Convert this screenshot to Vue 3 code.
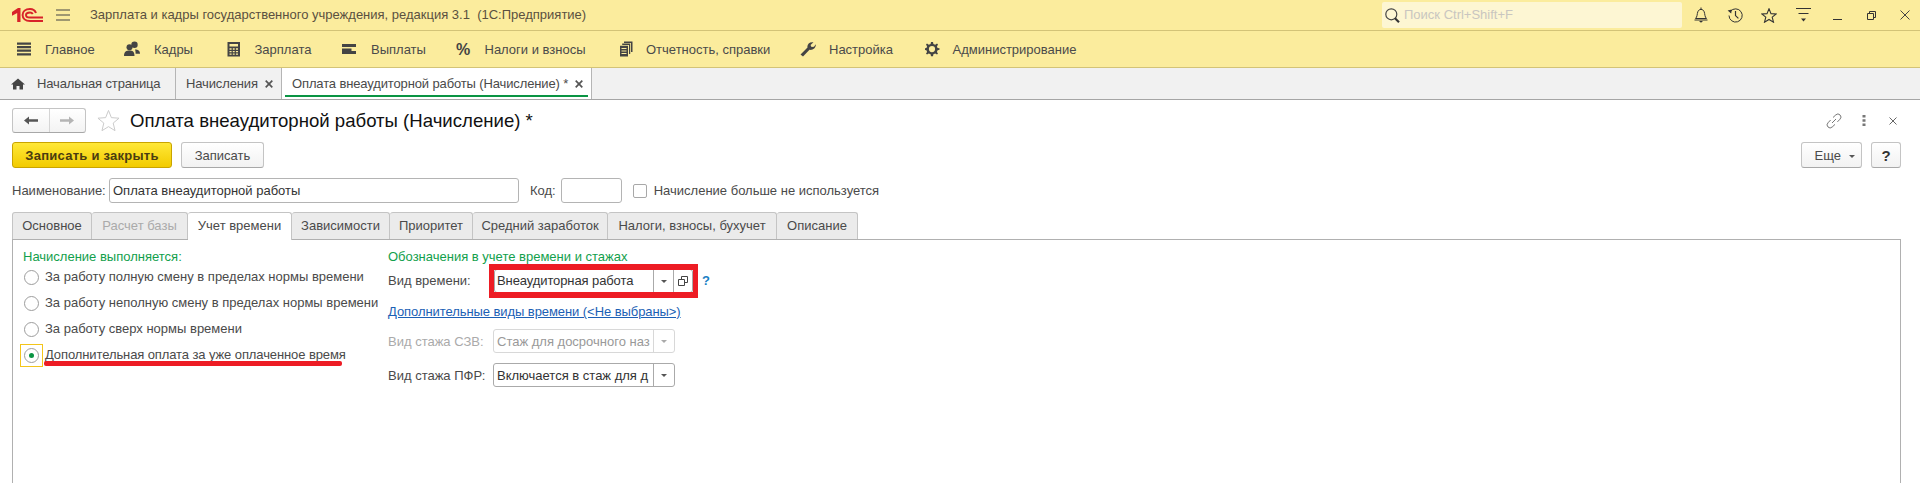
<template>
  <div class="page">
    <header class="titlebar">
      <svg class="logo" width="31" height="14" viewBox="0 0 31 14">
        <path d="M0 4 L6 0 H8.5 V14 H5.2 V5 L0 7.8 Z" fill="#d8232a" />
        <path d="M24 5 C23 2.4 21 1 18 1 C13.4 1 10.6 3.6 10.6 7 C10.6 10.4 13.4 13 18 13 H31 M20.8 6 C20.2 5 19.4 4.4 18 4.4 C15.6 4.4 14 5.4 14 7 C14 8.6 15.6 9.6 18 9.6 H31" stroke="#d8232a" stroke-width="2" fill="none" />
      </svg>
      <svg class="burger" width="14" height="12" viewBox="0 0 14 12">
        <path d="M0 1 H14 M0 6 H14 M0 11 H14" stroke="#444" fill="none" />
      </svg>
      <span class="app-title">Зарплата и кадры государственного учреждения, редакция 3.1&nbsp; (1С:Предприятие)</span>
      <div class="search">
        <svg width="15" height="15" viewBox="0 0 15 15">
          <circle cx="6.3" cy="6.3" r="5.5" stroke="#444" stroke-width="1.2" fill="none" />
          <path d="M10 10.2 L14 14.2" stroke="#333" stroke-width="2.2" />
        </svg>
        <span class="search-text">Поиск Ctrl+Shift+F</span>
      </div>
      <div class="sys-icons">
        <span class="sys-cell">
          <svg width="14" height="16" viewBox="0 0 14 16">
            <path d="M1.5 11.5 C3.4 9.8 3 7 3.8 4.8 C4.4 3.2 5.6 2.4 7 2.4 C8.4 2.4 9.6 3.2 10.2 4.8 C11 7 10.6 9.8 12.5 11.5 Z M0.5 13 H13.5" stroke="#333" fill="none" />
            <path d="M5 14 H9 L7 15.8 Z M6.5 0.5 H7.5 V2.4 H6.5 Z" fill="#333" />
          </svg>
        </span>
        <span class="sys-cell">
          <svg width="16" height="15" viewBox="0 0 16 15">
            <path d="M3.4 3.4 A6.6 6.6 0 1 1 2 7.5" stroke="#333" fill="none" />
            <path d="M0.6 2.6 L4.8 1.6 L4.2 5.6 Z" fill="#333" />
            <path d="M8.5 3 V7.6 L11.4 10.4" stroke="#333" stroke-width="1.2" fill="none" />
          </svg>
        </span>
        <span class="sys-cell">
          <svg width="16" height="15" viewBox="0 0 16 15">
            <path d="M8 0.8 L10 5.6 L15.2 5.9 L11.2 9.2 L12.5 14.2 L8 11.5 L3.5 14.2 L4.8 9.2 L0.8 5.9 L6 5.6 Z" stroke="#333" stroke-width="1.1" fill="none" />
          </svg>
        </span>
        <span class="sys-cell">
          <svg width="15" height="14" viewBox="0 0 15 14">
            <path d="M0 0.5 H15 M2.5 5.5 H12.5" stroke="#333" fill="none" />
            <path d="M5 10.5 H10 L7.5 13.5 Z" fill="#333" />
          </svg>
        </span>
        <span class="sys-cell">
          <svg width="9" height="10" viewBox="0 0 9 10"><path d="M0 9.5 H9" stroke="#333" /></svg>
        </span>
        <span class="sys-cell">
          <svg width="9" height="9" viewBox="0 0 9 9">
            <path d="M0.5 2.5 H6.5 V8.5 H0.5 Z M2.5 2.5 V0.5 H8.5 V6.5 H6.5" stroke="#333" fill="none" />
          </svg>
        </span>
        <span class="sys-cell">
          <svg width="10" height="10" viewBox="0 0 10 10">
            <path d="M0.5 0.5 L9.5 9.5 M9.5 0.5 L0.5 9.5" stroke="#444" fill="none" />
          </svg>
        </span>
      </div>
    </header>

    <nav class="sections">
      <a
        v-for="s in sections"
        :key="s.name"
        class="section"
        :style="{ width: s.width + 'px', gap: s.gap + 'px' }"
      >
        <svg width="16" height="16" viewBox="0 0 16 16" v-html="s.icon"></svg>
        <span>{{ s.name }}</span>
      </a>
    </nav>

    <div class="open-tabs">
      <div class="open-tab home">
        <svg width="14" height="12" viewBox="0 0 14 12">
          <path d="M7 0.5 L14 6.5 H12 V11.5 H8.5 V8 H5.5 V11.5 H2 V6.5 H0 Z" fill="#444" />
        </svg>
        <span>Начальная страница</span>
      </div>
      <div class="open-tab list">
        <span>Начисления</span>
        <svg class="close" width="8" height="8" viewBox="0 0 8 8"><path d="M0.7 0.7 L7.3 7.3 M7.3 0.7 L0.7 7.3" stroke="#555" stroke-width="1.7" /></svg>
      </div>
      <div class="open-tab current">
        <span>Оплата внеаудиторной работы (Начисление) *</span>
        <svg class="close" width="8" height="8" viewBox="0 0 8 8"><path d="M0.7 0.7 L7.3 7.3 M7.3 0.7 L0.7 7.3" stroke="#555" stroke-width="1.7" /></svg>
      </div>
    </div>

    <main class="form">
      <div class="form-head">
        <div class="nav-btns">
          <button>
            <svg width="14" height="9" viewBox="0 0 14 9"><path d="M0 4.5 L5 0.5 V3.3 H14 V5.7 H5 V8.5 Z" fill="#555" /></svg>
          </button>
          <button>
            <svg width="14" height="9" viewBox="0 0 14 9"><path d="M14 4.5 L9 0.5 V3.3 H0 V5.7 H9 V8.5 Z" fill="#b4b4b4" /></svg>
          </button>
        </div>
        <svg class="fav" width="23" height="23" viewBox="0 0 24 24">
          <path d="M12 1.5 L15 9 L23 9.6 L16.9 14.7 L18.8 22.6 L12 18.4 L5.2 22.6 L7.1 14.7 L1 9.6 L9 9 Z" stroke="#c9c9c9" fill="none" />
        </svg>
        <h1>Оплата внеаудиторной работы (Начисление) *</h1>
        <div class="head-tools">
          <svg width="16" height="16" viewBox="0 0 16 16">
            <path d="M6 10 L10 6 M7 4.5 L9.8 1.9 A2.6 2.6 0 0 1 14 6.2 L11.4 8.9 M9 11.4 L6.2 14 A2.6 2.6 0 0 1 2 9.8 L4.6 7" stroke="#777" fill="none" />
          </svg>
          <svg class="dots" width="4" height="11" viewBox="0 0 4 11">
            <path d="M0.5 0 H3.5 V2.5 H0.5 Z M0.5 4.2 H3.5 V6.7 H0.5 Z M0.5 8.5 H3.5 V11 H0.5 Z" fill="#777" />
          </svg>
          <svg width="8" height="8" viewBox="0 0 8 8">
            <path d="M0.5 0.5 L7.5 7.5 M7.5 0.5 L0.5 7.5" stroke="#666" fill="none" />
          </svg>
        </div>
      </div>

      <div class="commands">
        <button class="btn primary">Записать и закрыть</button>
        <button class="btn">Записать</button>
        <div class="commands-right">
          <button class="btn more">Еще <i class="caret"></i></button>
          <button class="btn help">?</button>
        </div>
      </div>

      <div class="name-row">
        <label class="name-label">Наименование:</label>
        <div class="input name">Оплата внеаудиторной работы</div>
        <label class="code-label">Код:</label>
        <div class="input code"></div>
        <span class="checkbox"></span>
        <label>Начисление больше не используется</label>
      </div>

      <div class="tabs">
        <div
          v-for="t in tabs"
          :key="t.name"
          class="tab"
          :class="{ active: t.active, disabled: t.disabled }"
          :style="{ width: t.width + 'px' }"
        >{{ t.name }}</div>
      </div>

      <div class="panel">
        <section class="col-left">
          <div class="group-title">Начисление выполняется:</div>
          <div v-for="r in radios" :key="r.text" class="radio-row" :class="{ checked: r.checked }">
            <span class="radio-box"><span class="radio"></span></span>
            <span class="radio-text">{{ r.text }}</span>
            <i v-if="r.checked" class="red-line"></i>
          </div>
        </section>

        <section class="col-right">
          <div class="group-title">Обозначения в учете времени и стажах</div>
          <div class="field-row first">
            <label>Вид времени:</label>
            <div class="combo wide">
              <span class="combo-text">Внеаудиторная работа</span>
              <span class="combo-btn"><i class="caret"></i></span>
              <span class="combo-btn">
                <svg width="10" height="10" viewBox="0 0 10 10">
                  <path d="M0.5 3.5 H6.5 V9.5 H0.5 Z M3.5 3.5 V0.5 H9.5 V6.5 H6.5" stroke="#444" fill="none" />
                </svg>
              </span>
              <i class="red-box"></i>
            </div>
            <a class="hint">?</a>
          </div>
          <a class="extra-link">Дополнительные виды времени (&lt;Не выбраны&gt;)</a>
          <div class="field-row muted">
            <label>Вид стажа СЗВ:</label>
            <div class="combo">
              <span class="combo-text">Стаж для досрочного наз</span>
              <span class="combo-btn"><i class="caret"></i></span>
            </div>
          </div>
          <div class="field-row">
            <label>Вид стажа ПФР:</label>
            <div class="combo">
              <span class="combo-text">Включается в стаж для д</span>
              <span class="combo-btn"><i class="caret"></i></span>
            </div>
          </div>
        </section>
      </div>
    </main>
  </div>
</template>

<script setup>
const sections = [
  {
    name: "Главное",
    width: 107,
    gap: 12,
    icon: '<path d="M0 1.5 H14 V3.7 H0 Z M0 5 H14 V7.2 H0 Z M0 8.6 H14 V10.8 H0 Z M0 12.2 H14 V14.4 H0 Z" fill="#444"/>',
  },
  {
    name: "Кадры",
    width: 102.5,
    gap: 14,
    icon: '<circle cx="10.5" cy="3.8" r="3.2" fill="#444"/><circle cx="5.5" cy="6.2" r="3" fill="#444"/><path d="M0 15 C0 10.5 2.5 9.4 5.5 9.4 C8.5 9.4 10.5 10.5 10.5 15 Z M11 8.4 C14 8.4 16 9.5 16 12.8 H11.6 C11.6 11 11.5 9.8 11 8.4 Z" fill="#444"/>',
  },
  {
    name: "Зарплата",
    width: 115.5,
    gap: 12,
    icon: '<path fill-rule="evenodd" d="M0.5 1 H13 V15.5 H0.5 Z M2.5 3 V5.5 H11 V3 Z M2.5 7.2 V8.7 H4.6 V7.2 Z M5.8 7.2 V8.7 H7.7 V7.2 Z M8.9 7.2 V8.7 H11 V7.2 Z M2.5 9.9 V11.2 H4.6 V9.9 Z M5.8 9.9 V11.2 H7.7 V9.9 Z M8.9 9.9 V11.2 H11 V9.9 Z M2.5 12.4 V13.8 H4.6 V12.4 Z M5.8 12.4 V13.8 H7.7 V12.4 Z M8.9 12.4 V13.8 H11 V12.4 Z" fill="#444"/>',
  },
  {
    name: "Выплаты",
    width: 113.5,
    gap: 13,
    icon: '<path d="M0 3 H14 V6 H0 Z M0 7.5 H9.5 V10 H14 V13 H0 Z" fill="#444"/>',
  },
  {
    name: "Налоги и взносы",
    width: 163.5,
    gap: 13,
    icon: '<text x="0" y="14" font-family="Liberation Sans" font-weight="700" font-size="16" fill="#444">%</text>',
  },
  {
    name: "Отчетность, справки",
    width: 181,
    gap: 11,
    icon: '<path fill-rule="evenodd" d="M5 0.5 H13.5 V11 H12 V2 H5 Z M3.2 2.5 H11.2 V13 H10 V4 H3.2 Z M1 4.8 H9 V15.5 H1 Z M2.5 7 V8 H7.5 V7 Z M2.5 9.5 V10.5 H7.5 V9.5 Z M2.5 12 V13 H7.5 V12 Z" fill="#444"/>',
  },
  {
    name: "Настройка",
    width: 124.5,
    gap: 13,
    icon: '<path d="M0.5 13.5 L7.5 6.5 C6.8 3.5 9.5 0.5 13.5 1.3 L10.5 4 L11.5 6 L14 5.8 L15.8 3.2 C16.2 7 12.5 9.6 9.5 8.8 L3 15.5 Z" fill="#444"/>',
  },
  {
    name: "Администрирование",
    width: 200,
    gap: 12,
    icon: '<path fill-rule="evenodd" d="M6 1 H8 L8.4 3 L10.2 3.7 L12 2.6 L13 3.6 L11.9 5.4 L12.6 7 L14.5 7.2 V8.8 L12.6 9.3 L11.9 11 L13 12.6 L12 13.6 L10.2 12.6 L8.4 13.3 L8 15.2 H6 L5.6 13.3 L3.8 12.6 L2 13.6 L1 12.6 L2.1 11 L1.4 9.3 L-0.5 8.8 V7.2 L1.4 7 L2.1 5.4 L1 3.6 L2 2.6 L3.8 3.7 L5.6 3 Z M7 5 A3.1 3.1 0 1 0 7 11.2 A3.1 3.1 0 1 0 7 5 Z" fill="#444"/>',
  },
];

const tabs = [
  { name: "Основное", width: 80 },
  { name: "Расчет базы", width: 96, disabled: true },
  { name: "Учет времени", width: 104, active: true },
  { name: "Зависимости", width: 98 },
  { name: "Приоритет", width: 83 },
  { name: "Средний заработок", width: 135 },
  { name: "Налоги, взносы, бухучет", width: 169 },
  { name: "Описание", width: 81 },
];

const radios = [
  { text: "За работу полную смену в пределах нормы времени" },
  { text: "За работу неполную смену в пределах нормы времени" },
  { text: "За работу сверх нормы времени" },
  { text: "Дополнительная оплата за уже оплаченное время", checked: true },
];
</script>

<style>
html,
body {
  margin: 0;
  background: #fff;
  overflow: hidden;
}
</style>

<style scoped>
.page {
  width: 1920px;
  height: 483px;
  overflow: hidden;
  font-family: "Liberation Sans", Arial, sans-serif;
  font-size: 13px;
  color: #4a4a4a;
  background: #fff;
}

.titlebar {
  height: 31px;
  box-sizing: border-box;
  background: #fbec9d;
  border-bottom: 1px solid #d3c377;
  display: flex;
  align-items: center;
  padding-left: 12px;
}

.logo {
  flex: none;
}

.burger {
  flex: none;
  margin-left: 13px;
}

.app-title {
  flex: 1;
  margin: -1px 0 0 20px;
  color: #5a5040;
  white-space: nowrap;
}

.search {
  flex: none;
  width: 300px;
  height: 26px;
  margin-right: 2px;
  box-sizing: border-box;
  background: #fdf6d3;
  border-radius: 2px;
  display: flex;
  align-items: center;
  gap: 4px;
  padding-left: 3px;
  color: #c9c6c0;
}

.search-text {
  margin-top: -1px;
}

.sys-icons {
  flex: none;
  width: 236px;
  height: 30px;
  display: flex;
}

.sys-cell {
  flex: none;
  width: 34px;
  height: 30px;
  display: flex;
  align-items: center;
  justify-content: center;
}

.sections {
  height: 37px;
  box-sizing: border-box;
  background: #fbec9d;
  border-bottom: 1px solid #d3c377;
  display: flex;
  align-items: center;
  padding-left: 17px;
}

.section {
  display: flex;
  align-items: center;
  flex: none;
  color: #4a4a4a;
  white-space: nowrap;
}

.section svg {
  flex: none;
}

.open-tabs {
  height: 32px;
  box-sizing: border-box;
  background: #f1f1f1;
  border-bottom: 1px solid #a5a5a5;
  display: flex;
}

.open-tab {
  display: flex;
  align-items: center;
  box-sizing: border-box;
  border-right: 1px solid #b5b5b5;
  position: relative;
  white-space: nowrap;
  letter-spacing: -0.13px;
}

.open-tab.home {
  width: 176px;
  padding-left: 11px;
  gap: 12px;
}

.open-tab.list {
  width: 106px;
  padding-left: 10px;
}

.open-tab.current {
  width: 310px;
  padding-left: 10px;
  background: #fff;
}

.open-tab.current::after {
  content: "";
  position: absolute;
  left: 3px;
  right: 3px;
  bottom: 2px;
  height: 2px;
  background: #0a9443;
}

.close {
  margin-left: 7px;
  flex: none;
}

.form {
  padding: 8px 19px 0 12px;
}

.form-head {
  height: 25px;
  display: flex;
  align-items: center;
}

.nav-btns {
  display: flex;
  height: 25px;
  box-sizing: border-box;
  width: 74px;
  border: 1px solid #c4c4c4;
  border-bottom-color: #a8a8a8;
  border-radius: 3px;
  background: linear-gradient(#fff, #f3f3f3);
}

.nav-btns button {
  flex: 1;
  padding: 0;
  border: 0;
  background: none;
  display: flex;
  align-items: center;
  justify-content: center;
}

.nav-btns button + button {
  border-left: 1px solid #d5d5d5;
}

.fav {
  margin-left: 11px;
  flex: none;
}

h1 {
  margin: 0 0 0 10px;
  font-size: 18.6px;
  font-weight: 400;
  color: #111;
  white-space: nowrap;
}

.head-tools {
  margin-left: auto;
  padding-right: 4px;
  display: flex;
  align-items: center;
}

.dots {
  margin: 0 23px 0 20px;
}

.commands {
  margin-top: 9px;
  height: 26px;
  display: flex;
  gap: 9px;
}

.btn {
  height: 26px;
  box-sizing: border-box;
  padding: 0;
  border: 1px solid #c4c4c4;
  border-bottom-color: #a8a8a8;
  border-radius: 3px;
  background: linear-gradient(#fff, #f2f2f2);
  font-family: inherit;
  font-size: 13px;
  color: #4a4a4a;
  width: 83px;
}

.btn.primary {
  width: 160px;
  font-weight: 700;
  background: linear-gradient(#ffe838, #f2cb00);
  border-color: #c9a400;
  color: #4a3c10;
  letter-spacing: 0.25px;
}

.commands-right {
  margin-left: auto;
  display: flex;
  gap: 9px;
}

.btn.more {
  width: 61px;
  padding-left: 6px;
  text-align: center;
}

.btn.more .caret {
  margin-left: 4px;
}

.btn.help {
  width: 30px;
  font-size: 15px;
  font-weight: 700;
  color: #333;
}

.caret {
  display: inline-block;
  width: 0;
  height: 0;
  border-left: 3px solid transparent;
  border-right: 3px solid transparent;
  border-top: 3px solid #555;
  vertical-align: middle;
}

.name-row {
  margin-top: 10px;
  height: 25px;
  display: flex;
  align-items: center;
}

.name-label {
  width: 97px;
  flex: none;
}

.input {
  height: 25px;
  box-sizing: border-box;
  border: 1px solid #b4b4b4;
  border-radius: 3px;
  line-height: 23px;
  padding-left: 3px;
  color: #333;
}

.input.name {
  width: 410px;
}

.code-label {
  margin-left: 11px;
}

.input.code {
  width: 61px;
  margin-left: 5px;
}

.checkbox {
  width: 14px;
  height: 14px;
  box-sizing: border-box;
  border: 1px solid #a8a8a8;
  border-radius: 2px;
  margin: 0 7px 0 11px;
}

.tabs {
  margin-top: 9px;
  height: 27px;
  display: flex;
  position: relative;
  z-index: 1;
}

.tab {
  height: 27px;
  box-sizing: border-box;
  flex: none;
  text-align: center;
  line-height: 25px;
  background: #ebebeb;
  border: 1px solid #c4c4c4;
  border-bottom: 0;
  border-left-width: 0;
  border-radius: 3px 3px 0 0;
}

.tab:first-child {
  border-left-width: 1px;
}

.tab.disabled {
  color: #aaa;
}

.tab.active {
  height: 28px;
  background: #fff;
}

.panel {
  height: 244px;
  box-sizing: border-box;
  border: 1px solid #b0b0b0;
  border-bottom: 0;
  padding: 10px 0 0 10px;
  display: flex;
}

.group-title {
  color: #12a04c;
  height: 14px;
  line-height: 14px;
}

.col-left {
  width: 365px;
  flex: none;
}

.radio-row {
  height: 26px;
  display: flex;
  align-items: center;
  position: relative;
}

.radio-box {
  width: 23px;
  height: 23px;
  box-sizing: border-box;
  display: flex;
  align-items: center;
  justify-content: center;
  flex: none;
  margin-left: -3px;
  border: 1px solid transparent;
}

.radio {
  width: 15px;
  height: 15px;
  box-sizing: border-box;
  border: 1px solid #9d9d9d;
  border-radius: 50%;
  display: block;
  position: relative;
}

.radio-text {
  margin: -2px 0 0 2px;
  white-space: nowrap;
}

.checked .radio-box {
  border-color: #f3c51b;
}

.checked .radio-text {
  letter-spacing: -0.1px;
}

.checked .radio::after {
  content: "";
  position: absolute;
  left: 4px;
  top: 4px;
  width: 5px;
  height: 5px;
  border-radius: 50%;
  background: #0a9443;
}

.red-line {
  position: absolute;
  left: 21px;
  top: 19px;
  width: 298px;
  height: 5px;
  border-radius: 2px;
  background: #ed1c24;
}

.col-right {
  flex: 1;
}

.field-row {
  display: flex;
  align-items: center;
  height: 24px;
  margin-top: 10px;
}

.field-row label {
  width: 105px;
  flex: none;
  white-space: nowrap;
}

.field-row.first {
  margin-top: 5px;
}

.field-row.first label {
  width: 106px;
  margin-top: -2px;
}

.combo {
  width: 182px;
  height: 24px;
  box-sizing: border-box;
  border: 1px solid #aaa;
  border-radius: 3px;
  display: flex;
  align-items: center;
  position: relative;
  color: #333;
}

.combo-text {
  flex: 1;
  min-width: 0;
  overflow: hidden;
  white-space: nowrap;
  padding-left: 3px;
}

.combo-btn {
  width: 21px;
  height: 100%;
  box-sizing: border-box;
  border-left: 1px solid #aaa;
  display: flex;
  align-items: center;
  justify-content: center;
  flex: none;
}

.combo.wide {
  width: 199px;
}

.wide .combo-text {
  padding-left: 2px;
  margin-top: -2px;
  letter-spacing: -0.1px;
}

.wide .combo-btn {
  width: 20px;
}

.wide .combo-btn:last-of-type {
  width: 19px;
}

.red-box {
  position: absolute;
  left: -6px;
  top: -6px;
  right: -6px;
  bottom: -6px;
  border-style: solid;
  border-color: #ed1c24;
  border-width: 6px 5px;
}

.hint {
  margin: -1px 0 0 9px;
  color: #1a7fc4;
  font-weight: 700;
}

.extra-link {
  display: block;
  margin-top: 11px;
  height: 16px;
  line-height: 16px;
  color: #1b5fb5;
  text-decoration: underline;
  letter-spacing: -0.07px;
}

.muted {
  margin-top: 9px;
  color: #aaa;
}

.muted .combo {
  border-color: #d8d8d8;
  color: #999;
}

.muted .combo-btn {
  border-left-color: #d8d8d8;
}

.muted .caret {
  border-top-color: #aaa;
}
</style>
